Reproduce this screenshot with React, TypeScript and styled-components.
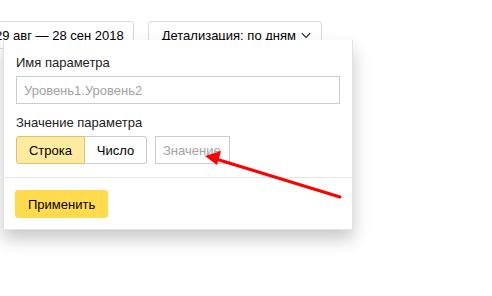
import styled, { createGlobalStyle } from 'styled-components';

const GlobalStyle = createGlobalStyle`
  html, body {
    margin: 0;
    background: #fff;
    font-family: 'Liberation Sans', Arial, sans-serif;
    font-size: 13px;
    color: #000;
  }
`;

const Page = styled.div`
  position: relative;
  width: 492px;
  height: 296px;
  overflow: hidden;
  padding-top: 21px;
  box-sizing: border-box;
`;

const Toolbar = styled.div`
  display: flex;
  gap: 14px;
  margin-left: -19px;
`;

const ToolButton = styled.button<{ $right?: number }>`
  display: flex;
  align-items: center;
  gap: 5px;
  height: 28px;
  padding: 0 ${(p) => p.$right ?? 9}px 0 13px;
  border: 1px solid #d9d9d9;
  border-radius: 3px;
  background: #fff;
  font: inherit;
  color: #000;
  white-space: nowrap;
`;

const Popup = styled.div`
  position: absolute;
  left: 3px;
  top: 40px;
  width: 350px;
  background: #fff;
  border: 1px solid #e3e3e3;
  border-top: none;
  box-sizing: border-box;
  box-shadow: 0 9px 16px rgba(0, 0, 0, 0.22);
`;

const Section = styled.div`
  display: flex;
  flex-direction: column;
  padding: 15px 12px 13px;
`;

const Label = styled.div`
  line-height: 16px;
  color: #222;
  margin-bottom: 5px;
`;

const Field = styled.div`
  margin-bottom: 11px;
  &:last-child {
    margin-bottom: 0;
  }
`;

const TextInput = styled.input<{ $width?: number }>`
  box-sizing: border-box;
  height: 28px;
  width: ${(p) => (p.$width ? `${p.$width}px` : '100%')};
  padding: 0 7px;
  border: 1px solid #ccc;
  border-radius: 0;
  font: inherit;
  outline: none;
  &::placeholder {
    color: #a3a3a3;
  }
`;

const Row = styled.div`
  display: flex;
  gap: 8px;
`;

const Segmented = styled.div`
  display: flex;
  height: 28px;
`;

const Segment = styled.button<{ $active?: boolean; $width: number }>`
  box-sizing: border-box;
  width: ${(p) => p.$width}px;
  height: 28px;
  border: 1px solid ${(p) => (p.$active ? '#d8c27c' : '#ccc')};
  border-left-width: ${(p) => (p.$active ? '1px' : '0')};
  border-radius: ${(p) => (p.$active ? '3px 0 0 3px' : '0 3px 3px 0')};
  background: ${(p) => (p.$active ? '#ffeba0' : '#fff')};
  font: inherit;
  color: #000;
  padding: 0;
`;

const Footer = styled.div`
  border-top: 1px solid #e6e6e6;
  padding: 12px 11px 11px;
`;

const ApplyButton = styled.button`
  height: 28px;
  padding: 0 13px;
  border: none;
  border-radius: 3px;
  background: #ffdb4d;
  font: inherit;
  color: #000;
`;

const Annotation = styled.svg`
  position: absolute;
  left: 0;
  top: 0;
  pointer-events: none;
`;

const Chevron = () => (
  <svg width="10" height="7" viewBox="0 0 10 7">
    <path d="M0.8 1.2l4.2 4.2 4.2-4.2" fill="none" stroke="#222" strokeWidth="1.1" />
  </svg>
);

export default function App() {
  return (
    <Page>
      <GlobalStyle />
      <Toolbar>
        <ToolButton>29 авг — 28 сен 2018</ToolButton>
        <ToolButton $right={10}>
          Детализация: по дням
          <Chevron />
        </ToolButton>
      </Toolbar>
      <Popup>
        <Section>
          <Field>
            <Label>Имя параметра</Label>
            <TextInput placeholder="Уровень1.Уровень2" />
          </Field>
          <Field>
            <Label>Значение параметра</Label>
            <Row>
              <Segmented>
                <Segment $active $width={69}>
                  Строка
                </Segment>
                <Segment $width={62}>Число</Segment>
              </Segmented>
              <TextInput $width={75} placeholder="Значение" />
            </Row>
          </Field>
        </Section>
        <Footer>
          <ApplyButton>Применить</ApplyButton>
        </Footer>
      </Popup>
      <Annotation width="492" height="296">
        <line x1="340" y1="197" x2="216" y2="159" stroke="#f00" strokeWidth="3" strokeLinecap="round" />
        <polygon points="205,156 221,151 217,165" fill="#f00" />
      </Annotation>
    </Page>
  );
}
